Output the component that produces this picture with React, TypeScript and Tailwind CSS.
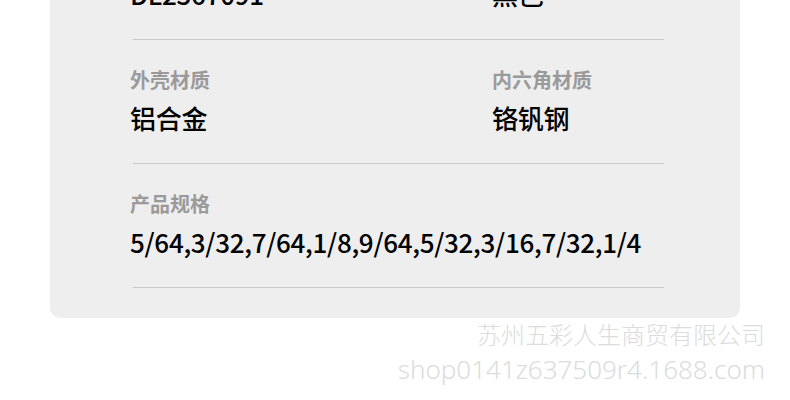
const rows = [
  [
    { label: "产品型号", value: "DL2567091" },
    { label: "颜色", value: "黑色" },
  ],
  [
    { label: "外壳材质", value: "铝合金" },
    { label: "内六角材质", value: "铬钒钢" },
  ],
  [{ label: "产品规格", value: "5/64,3/32,7/64,1/8,9/64,5/32,3/16,7/32,1/4" }],
];

const Cell = ({ label, value }: { label: string; value: string }) => (
  <div className="flex flex-col gap-[9px]">
    <div className="text-[20px] leading-[24px] font-bold text-[#9a9a9a]">{label}</div>
    <div className="text-[26px] leading-[34px] font-medium text-black whitespace-nowrap tracking-[-0.3px]">
      {value}
    </div>
  </div>
);

const App = () => {
  return (
    <div
      className="w-[790px] h-[400px] overflow-hidden bg-white"
      style={{ fontFamily: '"Noto Sans CJK SC", "Noto Sans", sans-serif' }}
    >
      <div className="mx-[50px] -mt-[100px] pt-[16px] pb-[30px] bg-[#eeeeee] rounded-[10px]">
        {rows.map((row, i) => (
          <div key={i}>
            <div className="flex pl-[80px] pt-[28px] pb-[28px]">
              {row.map((c, j) => (
                <div key={j} className={j === 0 && row.length > 1 ? "w-[362px]" : ""}>
                  <Cell label={c.label} value={c.value} />
                </div>
              ))}
            </div>
            <div className="ml-[83px] w-[531px] h-px bg-[#c9c9c9]" />
          </div>
        ))}
      </div>
      <div className="flex flex-col items-end pr-[25px] text-[#dcdcdc] font-light">
        <div className="text-[24px] leading-[32px]">苏州五彩人生商贸有限公司</div>
        <div className="text-[26px] leading-[38px]" style={{ fontFamily: '"Noto Sans", sans-serif' }}>
          shop0141z637509r4.1688.com
        </div>
      </div>
    </div>
  );
};

export default App;
